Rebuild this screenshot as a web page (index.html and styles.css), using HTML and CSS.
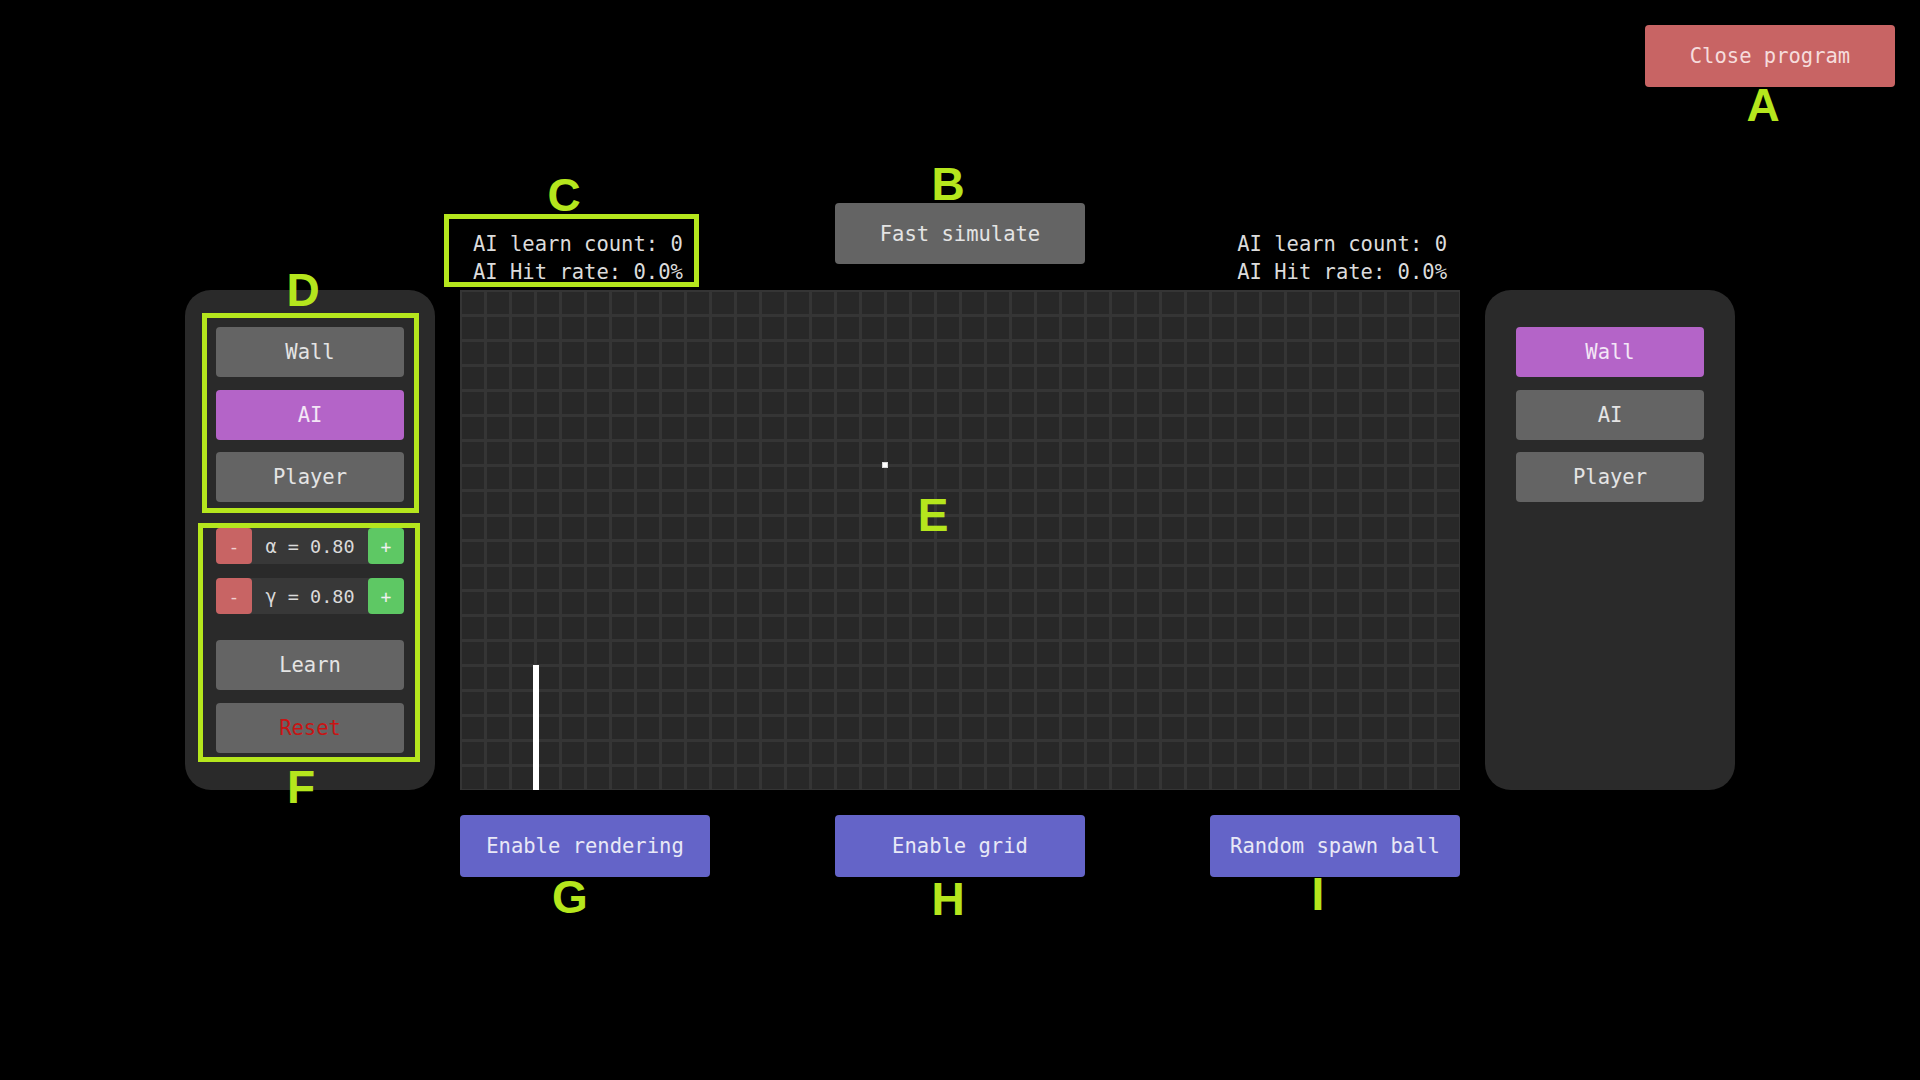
FILE: index.html
```html
<!DOCTYPE html>
<html lang="en">
<head>
<meta charset="utf-8">
<title>Pong Q-learning</title>
<link rel="stylesheet" href="styles.css">
</head>
<body>
<div class="app">
  <div class="topbar">
    <button class="btn btn-close">Close program</button>
  </div>

  <div class="header">
    <div class="stats stats-left">
      <div class="stat-line">AI learn count: 0</div>
      <div class="stat-line">AI Hit rate: 0.0%</div>
    </div>
    <button class="btn btn-grey btn-fast">Fast simulate</button>
    <div class="stats stats-right">
      <div class="stat-line">AI learn count: 0</div>
      <div class="stat-line">AI Hit rate: 0.0%</div>
    </div>
  </div>

  <div class="main">
    <div class="panel">
      <div class="modes">
        <button class="btn btn-grey btn-mode">Wall</button>
        <button class="btn btn-purple btn-mode">AI</button>
        <button class="btn btn-grey btn-mode">Player</button>
      </div>
      <div class="params">
        <div class="param">
          <button class="pbtn pbtn-minus">-</button>
          <span class="pval">α = 0.80</span>
          <button class="pbtn pbtn-plus">+</button>
        </div>
        <div class="param">
          <button class="pbtn pbtn-minus">-</button>
          <span class="pval">γ = 0.80</span>
          <button class="pbtn pbtn-plus">+</button>
        </div>
      </div>
      <div class="actions">
        <button class="btn btn-grey btn-mode">Learn</button>
        <button class="btn btn-grey btn-mode btn-reset">Reset</button>
      </div>
    </div>

    <div class="field">
      <div class="paddle"></div>
      <div class="ball"></div>
    </div>

    <div class="panel">
      <div class="modes">
        <button class="btn btn-purple btn-mode">Wall</button>
        <button class="btn btn-grey btn-mode">AI</button>
        <button class="btn btn-grey btn-mode">Player</button>
      </div>
    </div>
  </div>

  <div class="footer">
    <button class="btn btn-blue btn-wide">Enable rendering</button>
    <button class="btn btn-blue btn-wide">Enable grid</button>
    <button class="btn btn-blue btn-wide">Random spawn ball</button>
  </div>

  <div class="anno-box box-c"></div>
  <div class="anno-box box-d"></div>
  <div class="anno-box box-f"></div>

  <div class="anno-letter l-a">A</div>
  <div class="anno-letter l-b">B</div>
  <div class="anno-letter l-c">C</div>
  <div class="anno-letter l-d">D</div>
  <div class="anno-letter l-e">E</div>
  <div class="anno-letter l-f">F</div>
  <div class="anno-letter l-g">G</div>
  <div class="anno-letter l-h">H</div>
  <div class="anno-letter l-i">I</div>
</div>
</body>
</html>
```

FILE: styles.css
```css
* { box-sizing: border-box; }

html, body {
  margin: 0;
  padding: 0;
  background: #000;
}

.app {
  position: relative;
  width: 1920px;
  height: 1080px;
  overflow: hidden;
  background: #000;
  font-family: "DejaVu Sans Mono", "Liberation Mono", monospace;
  font-size: 20.5px;
  color: #e0e0e0;
}

/* generic buttons */
.btn {
  display: flex;
  align-items: center;
  justify-content: center;
  border: none;
  margin: 0;
  padding: 0;
  border-radius: 4px;
  font-family: "DejaVu Sans Mono", "Liberation Mono", monospace;
  font-size: 20.5px;
  color: #e6e6e6;
  cursor: pointer;
}
.btn-grey { background: #646464; color: #e4e4e4; }
.btn-purple { background: #b464c8; color: #f3e6f6; }
.btn-blue { background: #6464c8; color: #e8e8f6; }
.btn-close { background: #c86464; color: #f6dcdc; width: 250px; height: 62px; }

/* top bar */
.topbar {
  display: flex;
  justify-content: flex-end;
  padding: 25px 25px 0 0;
  height: 87px;
}

/* header above the field */
.header {
  width: 1000px;
  height: 87px;
  margin: 116px auto 0;
  display: grid;
  grid-template-columns: 1fr 250px 1fr;
}
.btn-fast {
  width: 250px;
  height: 61px;
  align-self: start;
}
.stats {
  align-self: end;
  padding-bottom: 4px;
  display: flex;
  flex-direction: column;
  color: #dcdcdc;
}
.stat-line {
  height: 28px;
  line-height: 28px;
  white-space: nowrap;
}
.stats-left { padding-left: 13px; justify-self: start; }
.stats-right { padding-right: 13px; justify-self: end; }

/* main row */
.main {
  display: flex;
  justify-content: center;
  gap: 25px;
  height: 500px;
}

.panel {
  width: 250px;
  height: 500px;
  background: #2a2a2a;
  border-radius: 26px;
  padding: 37px 31px 0;
  display: flex;
  flex-direction: column;
}
.modes {
  display: flex;
  flex-direction: column;
  gap: 12.5px;
}
.btn-mode {
  width: 188px;
  height: 50px;
}
.params {
  margin-top: 26px;
  display: flex;
  flex-direction: column;
  gap: 14px;
}
.param {
  display: flex;
  align-items: center;
  height: 36px;
  background: #383838;
  border-radius: 4px;
}
.pbtn {
  width: 36px;
  height: 36px;
  border: none;
  border-radius: 4px;
  padding: 0;
  font-family: "DejaVu Sans Mono", "Liberation Mono", monospace;
  font-size: 18px;
  color: #f0f0f0;
  display: flex;
  align-items: center;
  justify-content: center;
}
.pbtn-minus { background: #c86464; color: #f0d0d0; }
.pbtn-plus { background: #5ec864; }
.pval {
  flex: 1;
  text-align: center;
  font-size: 18.5px;
  color: #dadada;
}
.actions {
  margin-top: 26px;
  display: flex;
  flex-direction: column;
  gap: 13px;
}
.btn-reset { color: #c81414; }

/* game field */
.field {
  position: relative;
  width: 1000px;
  height: 500px;
  background-color: #282828;
  background-image:
    linear-gradient(to right, transparent 22px, #353535 22px),
    linear-gradient(to bottom, transparent 22px, #353535 22px);
  background-size: 25px 25px;
  background-position: 2px 2px;
}
.paddle {
  position: absolute;
  left: 73px;
  top: 375px;
  width: 6px;
  height: 125px;
  background: #ffffff;
}
.ball {
  position: absolute;
  left: 422px;
  top: 172px;
  width: 6px;
  height: 6px;
  background: #ffffff;
  border: 1px solid #d8d8d8;
}

/* footer */
.footer {
  width: 1000px;
  margin: 25px auto 0;
  display: flex;
  justify-content: space-between;
}
.btn-wide {
  width: 250px;
  height: 62px;
}

/* annotations overlay */
.anno-box {
  position: absolute;
  border: 5px solid #b5e61d;
}
.box-c { left: 444px; top: 214px; width: 255px; height: 73px; }
.box-d { left: 202px; top: 313px; width: 217px; height: 200px; }
.box-f { left: 198px; top: 523px; width: 222px; height: 239px; }

.anno-letter {
  position: absolute;
  width: 60px;
  text-align: center;
  font-family: "Liberation Sans", Arial, sans-serif;
  font-weight: bold;
  font-size: 46px;
  line-height: 46px;
  color: #b5e61d;
}
.l-a { left: 1733px; top: 82px; }
.l-b { left: 918px; top: 161px; }
.l-c { left: 534px; top: 172px; }
.l-d { left: 273px; top: 267px; }
.l-e { left: 903px; top: 492px; }
.l-f { left: 271px; top: 764px; }
.l-g { left: 540px; top: 874px; }
.l-h { left: 918px; top: 876px; }
.l-i { left: 1288px; top: 871px; }
```
